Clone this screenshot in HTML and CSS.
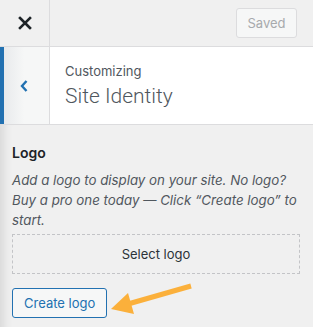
FILE: index.html
```html
<!DOCTYPE html>
<html lang="en">
<head>
  <meta charset="UTF-8">
  <meta name="viewport" content="width=device-width, initial-scale=1.0">
  <title>Customizing Site Identity</title>
  <link rel="stylesheet" href="styles.css">
</head>
<body>
  <!-- Top bar -->
  <header class="topbar">
    <button class="close" aria-label="Close">
      <svg width="14" height="14" viewBox="0 0 14 14">
        <path d="M2 2 L12 12 M12 2 L2 12" stroke="#1d2327" stroke-width="2.6" stroke-linecap="square"/>
      </svg>
    </button>
    <button class="saved" disabled>Saved</button>
  </header>

  <!-- Section header -->
  <div class="section-head">
    <button class="back" aria-label="Back">
      <svg width="10" height="14" viewBox="0 0 10 14">
        <path d="M7.5 2 L3 7 L7.5 12" fill="none" stroke="#2271b1" stroke-width="2.4"/>
      </svg>
    </button>
    <div class="section-title">
      <span class="crumb">Customizing</span>
      <h2>Site Identity</h2>
    </div>
  </div>

  <!-- Controls -->
  <div class="content">
    <div class="control">
      <span class="control-title">Logo</span>
      <p class="desc">Add a logo to display on your site. No logo? Buy a pro one today — Click “Create logo” to start.</p>
      <button class="select-logo">Select logo</button>
      <button class="create-logo">Create logo</button>
      <svg class="arrow" width="100" height="45" viewBox="0 0 100 45">
        <path d="M91 10 L28 28" stroke="#fbb03b" stroke-width="5"/>
        <path d="M11 33 L28 17 L34 38 Z" fill="#fbb03b"/>
      </svg>
    </div>
  </div>
</body>
</html>
```

FILE: styles.css
```css
/* General */
body {
  margin: 0;
  height: 327px;
  background: #f0f0f0;
  font-family: Inter, "Noto Sans", sans-serif;
  color: #50575e;
  overflow: hidden;
}

button {
  font-family: inherit;
}

/* Top bar */
.topbar {
  display: flex;
  align-items: center;
  justify-content: space-between;
  height: 46px;
  border-bottom: 1px solid #dcdcde;
  padding-right: 16px;
}

.close {
  width: 50px;
  height: 46px;
  border: none;
  border-right: 1px solid #dcdcde;
  background: transparent;
  display: flex;
  align-items: center;
  justify-content: center;
  padding: 0;
}

.saved {
  width: 61px;
  height: 30px;
  border: 1px solid #dcdcde;
  border-radius: 3px;
  background: #f6f7f7;
  color: #a7aaad;
  font-size: 13px;
  padding: 0;
}

/* Section header */
.section-head {
  display: flex;
  height: 77px;
  background: #fff;
  border-bottom: 1px solid #dcdcde;
}

.back {
  width: 50px;
  border: none;
  border-left: 4px solid #2271b1;
  border-right: 1px solid #dcdcde;
  background: linear-gradient(to right, #e8eaec, #f6f7f7 45%);
  display: flex;
  align-items: center;
  justify-content: center;
  padding: 0 6px 0 0;
}

.section-title {
  display: flex;
  flex-direction: column;
  justify-content: center;
  padding-left: 15px;
}

.crumb {
  font-size: 13px;
  line-height: 18px;
}

.section-title h2 {
  margin: 3px 0 0;
  font-family: Roboto, sans-serif;
  font-size: 21px;
  font-weight: 300;
  line-height: 26px;
}

/* Controls */
.content {
  padding: 18px 13px 0 12px;
  box-shadow: inset 12px 0 10px -8px rgba(0, 0, 0, 0.1);
  height: 200px;
}

.control {
  position: relative;
}

.control-title {
  display: block;
  font-size: 14px;
  font-weight: 600;
  color: #1d2327;
  line-height: 20px;
}

.desc {
  margin: 7px 0 4px;
  font-size: 13.3px;
  font-style: italic;
  line-height: 20px;
}

.select-logo {
  display: block;
  width: 100%;
  height: 40px;
  border: 1px dashed #c3c4c7;
  background: transparent;
  color: #2c3338;
  font-size: 13px;
}

.create-logo {
  display: block;
  margin-top: 14px;
  height: 30px;
  padding: 0 11px;
  border: 1px solid #2271b1;
  border-radius: 3px;
  background: #f6f7f7;
  color: #2271b1;
  font-size: 13px;
}

.arrow {
  position: absolute;
  left: 88px;
  bottom: -3px;
}
```
